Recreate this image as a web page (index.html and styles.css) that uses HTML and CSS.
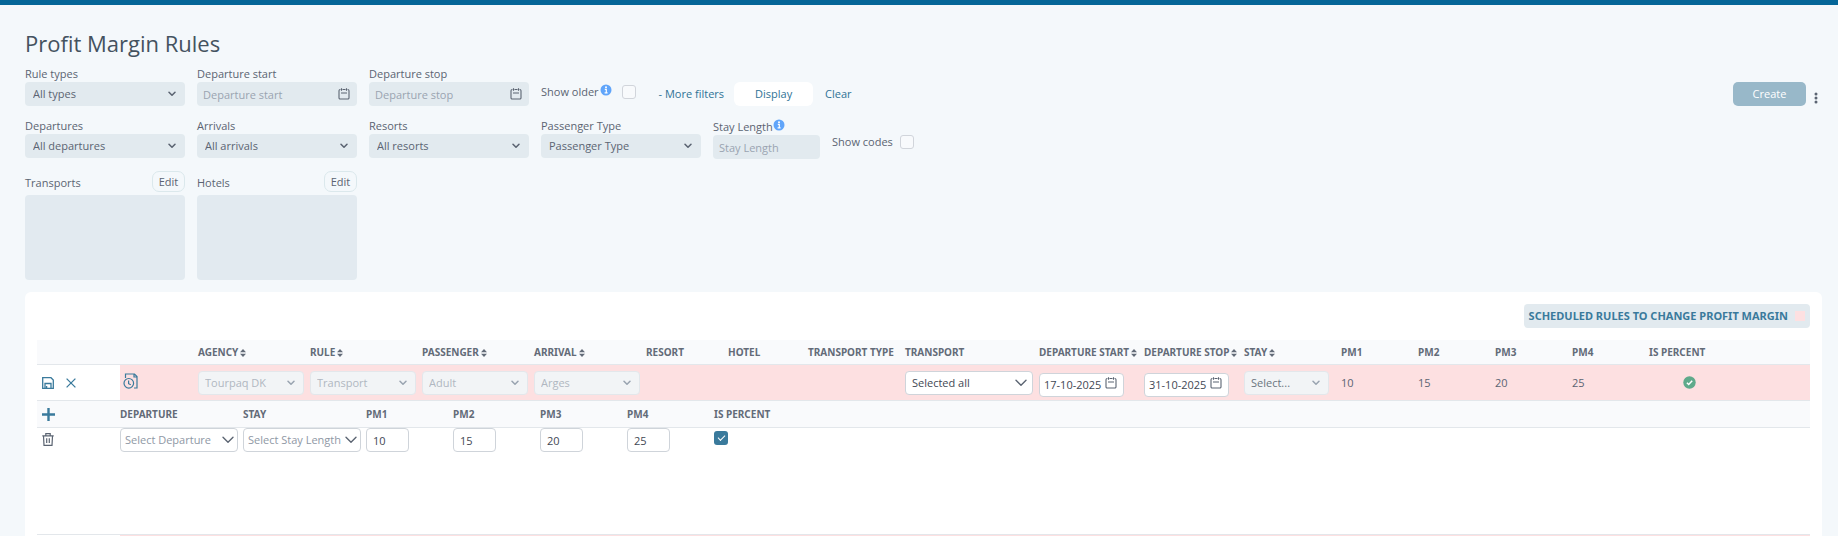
FILE: index.html
```html
<!DOCTYPE html>
<html lang="en">
<head>
<meta charset="utf-8">
<title>Profit Margin Rules</title>
<link rel="stylesheet" href="styles.css">
</head>
<body>
<svg class="sprite" width="0" height="0" aria-hidden="true">
  <symbol id="chev" viewBox="0 0 8 6"><path d="M1 1.2 4 4.3 7 1.2" fill="none" stroke="currentColor" stroke-width="1.5" stroke-linecap="round" stroke-linejoin="round"/></symbol>
  <symbol id="chev-lg" viewBox="0 0 12 8"><path d="M1 1.3 6 6.3 11 1.3" fill="none" stroke="currentColor" stroke-width="1.4" stroke-linecap="round" stroke-linejoin="round"/></symbol>
  <symbol id="cal" viewBox="0 0 12 12"><path d="M3.500.2v2.600M8.500.2v2.600M3 5h6M4.500 1.500h3M2.400 1.500H2A1.300 1.300 0 0 0 1 2.800v6.900A1.200 1.200 0 0 0 2.200 11h7.600A1.200 1.200 0 0 0 11 9.700V2.800A1.300 1.300 0 0 0 10 1.500h-.4" fill="none" stroke="currentColor" stroke-width="1.100"/></symbol>
  <symbol id="info" viewBox="0 0 12 12"><circle cx="6" cy="6" r="5.500" fill="#60a5fa"/><circle cx="6" cy="3.200" r="1" fill="#fff"/><path d="M4.800 5.300h1.500v3.400M4.600 8.900h3" fill="none" stroke="#fff" stroke-width="1.200"/></symbol>
  <symbol id="sort" viewBox="0 0 6 8"><path d="M3 0 6 3.300H0zM3 8 0 4.700h6z" fill="currentColor"/></symbol>
  <symbol id="save" viewBox="0 0 12 12"><path d="M.7.7h8.300l2.300 2.300v8.300H.7zM3 11.300V6.500h6v4.800M4.600 11V9" fill="none" stroke="currentColor" stroke-width="1.300"/></symbol>
  <symbol id="close" viewBox="0 0 10 10"><path d="M.6.6l8.800 8.800M9.400.6.6 9.400" fill="none" stroke="currentColor" stroke-width="1.300"/></symbol>
  <symbol id="history" viewBox="0 0 15 16"><path d="M2.500 5V1h9L14 3.500V15h-3M11 1v3h3" fill="none" stroke="currentColor" stroke-width="1.200"/><circle cx="5.800" cy="10.300" r="4.800" fill="none" stroke="currentColor" stroke-width="1.200"/><path d="M5.600 7.500v3.200l2.200 1.100" fill="none" stroke="currentColor" stroke-width="1.200"/></symbol>
  <symbol id="plus" viewBox="0 0 13 13"><path d="M6.500 0v13M0 6.500h13" fill="none" stroke="currentColor" stroke-width="2.400"/></symbol>
  <symbol id="trash" viewBox="0 0 12 13"><path d="M.3 2.800h11.400M3.800 2.600V.7h4.400v1.900M1.500 3l.5 9.300h8l.5-9.300M4.700 5.300v4.700M7.300 5.300v4.700" fill="none" stroke="currentColor" stroke-width="1.200"/></symbol>
  <symbol id="ok" viewBox="0 0 13 13"><circle cx="6.500" cy="6.500" r="6.200" fill="#5faa8b"/><path d="M3.900 6.700l1.800 1.800 3.500-3.700" fill="none" stroke="#fff" stroke-width="1.500"/></symbol>
  <symbol id="dots" viewBox="0 0 4 12"><g fill="currentColor"><circle cx="2" cy="2" r="1.500"/><circle cx="2" cy="6" r="1.500"/><circle cx="2" cy="10" r="1.500"/></g></symbol>
</svg>

<div class="topbar"></div>
<main class="page">
  <h1>Profit Margin Rules</h1>

  <form class="filters">
    <div class="filter-row">
      <div class="field">
        <label for="types">Rule types</label>
        <div class="control"><select id="types"><option>All types</option></select><svg class="chev"><use href="#chev"/></svg></div>
      </div>
      <div class="field">
        <label for="dstart">Departure start</label>
        <div class="control"><input id="dstart" type="text" placeholder="Departure start"><svg class="cal"><use href="#cal"/></svg></div>
      </div>
      <div class="field">
        <label for="dstop">Departure stop</label>
        <div class="control"><input id="dstop" type="text" placeholder="Departure stop"><svg class="cal"><use href="#cal"/></svg></div>
      </div>
      <div class="check check-older">
        <label for="older">Show older</label><svg class="info"><use href="#info"/></svg><input id="older" type="checkbox">
      </div>
      <div class="actions">
        <button type="button" class="link">- More filters</button>
        <button type="button" class="display">Display</button>
        <button type="button" class="link">Clear</button>
      </div>
      <div class="right">
        <button type="button" class="create">Create</button>
        <button type="button" class="menu" aria-label="Menu"><svg class="dots"><use href="#dots"/></svg></button>
      </div>
    </div>

    <div class="filter-row">
      <div class="field">
        <label for="deps">Departures</label>
        <div class="control"><select id="deps"><option>All departures</option></select><svg class="chev"><use href="#chev"/></svg></div>
      </div>
      <div class="field">
        <label for="arrs">Arrivals</label>
        <div class="control"><select id="arrs"><option>All arrivals</option></select><svg class="chev"><use href="#chev"/></svg></div>
      </div>
      <div class="field">
        <label for="resorts">Resorts</label>
        <div class="control"><select id="resorts"><option>All resorts</option></select><svg class="chev"><use href="#chev"/></svg></div>
      </div>
      <div class="field">
        <label for="ptype">Passenger Type</label>
        <div class="control"><select id="ptype"><option>Passenger Type</option></select><svg class="chev"><use href="#chev"/></svg></div>
      </div>
      <div class="field field-stay">
        <div class="label-line"><label for="stay">Stay Length</label><svg class="info"><use href="#info"/></svg></div>
        <div class="control"><input id="stay" type="text" placeholder="Stay Length"></div>
      </div>
      <div class="check check-codes">
        <label for="codes">Show codes</label><input id="codes" type="checkbox">
      </div>
    </div>

    <div class="filter-row">
      <div class="field">
        <div class="list-head"><label for="transports">Transports</label><button type="button" class="edit">Edit</button></div>
        <textarea id="transports" readonly></textarea>
      </div>
      <div class="field">
        <div class="list-head"><label for="hotels">Hotels</label><button type="button" class="edit">Edit</button></div>
        <textarea id="hotels" readonly></textarea>
      </div>
    </div>
  </form>

  <section class="card">
    <div class="legend-line">
      <button type="button" class="legend">SCHEDULED RULES TO CHANGE PROFIT MARGIN<span class="swatch"></span></button>
    </div>

    <table class="rules">
      <colgroup>
        <col class="c-tools"><col class="c-hist"><col class="c-wide"><col class="c-wide"><col class="c-wide"><col class="c-wide">
        <col class="c-resort"><col class="c-hotel"><col class="c-ttype"><col class="c-transport"><col class="c-start"><col class="c-stop"><col class="c-stay">
        <col class="c-pm"><col class="c-pm"><col class="c-pm"><col class="c-pm"><col>
      </colgroup>
      <thead>
        <tr>
          <th></th><th></th>
          <th>AGENCY<svg class="sort"><use href="#sort"/></svg></th>
          <th>RULE<svg class="sort"><use href="#sort"/></svg></th>
          <th>PASSENGER<svg class="sort"><use href="#sort"/></svg></th>
          <th>ARRIVAL<svg class="sort"><use href="#sort"/></svg></th>
          <th>RESORT</th><th>HOTEL</th><th>TRANSPORT TYPE</th><th>TRANSPORT</th>
          <th>DEPARTURE START<svg class="sort"><use href="#sort"/></svg></th>
          <th>DEPARTURE STOP<svg class="sort"><use href="#sort"/></svg></th>
          <th>STAY<svg class="sort"><use href="#sort"/></svg></th>
          <th>PM1</th><th>PM2</th><th>PM3</th><th>PM4</th><th>IS PERCENT</th>
        </tr>
      </thead>
      <tbody>
        <tr class="scheduled">
          <td class="plain"><div class="tools"><button type="button" class="icon" aria-label="Save"><svg class="save"><use href="#save"/></svg></button><button type="button" class="icon" aria-label="Cancel"><svg class="close"><use href="#close"/></svg></button></div></td>
          <td class="hist"><svg class="history"><use href="#history"/></svg></td>
          <td><div class="control cell off"><select aria-label="Agency" disabled><option>Tourpaq DK</option></select><svg class="chev"><use href="#chev"/></svg></div></td>
          <td><div class="control cell off"><select aria-label="Rule" disabled><option>Transport</option></select><svg class="chev"><use href="#chev"/></svg></div></td>
          <td><div class="control cell off"><select aria-label="Passenger" disabled><option>Adult</option></select><svg class="chev"><use href="#chev"/></svg></div></td>
          <td><div class="control cell off"><select aria-label="Arrival" disabled><option>Arges</option></select><svg class="chev"><use href="#chev"/></svg></div></td>
          <td></td><td></td><td></td>
          <td><div class="control cell"><select aria-label="Transport"><option>Selected all</option></select><svg class="chev-lg"><use href="#chev-lg"/></svg></div></td>
          <td class="date"><div class="control cell"><input type="text" aria-label="Departure start" value="17-10-2025"><svg class="cal"><use href="#cal"/></svg></div></td>
          <td class="date"><div class="control cell"><input type="text" aria-label="Departure stop" value="31-10-2025"><svg class="cal"><use href="#cal"/></svg></div></td>
          <td class="stay"><div class="control cell off"><select aria-label="Stay" disabled><option>Select...</option></select><svg class="chev"><use href="#chev"/></svg></div></td>
          <td>10</td><td>15</td><td>20</td><td>25</td>
          <td class="percent"><svg class="ok"><use href="#ok"/></svg></td>
        </tr>
        <tr>
          <td class="nest" colspan="18">
            <table class="margins">
              <colgroup><col class="c-tools"><col class="m-wide"><col class="m-wide"><col class="m-pm"><col class="m-pm"><col class="m-pm"><col class="m-pm"><col></colgroup>
              <thead>
                <tr>
                  <th><div class="tools"><button type="button" class="icon" aria-label="Add"><svg class="plus"><use href="#plus"/></svg></button></div></th>
                  <th>DEPARTURE</th><th>STAY</th><th>PM1</th><th>PM2</th><th>PM3</th><th>PM4</th><th>IS PERCENT</th>
                </tr>
              </thead>
              <tbody>
                <tr>
                  <td><div class="tools"><button type="button" class="icon grey" aria-label="Delete"><svg class="trash"><use href="#trash"/></svg></button></div></td>
                  <td><div class="control cell hint"><select aria-label="Departure"><option>Select Departure</option></select><svg class="chev-lg"><use href="#chev-lg"/></svg></div></td>
                  <td><div class="control cell hint"><select aria-label="Stay"><option>Select Stay Length</option></select><svg class="chev-lg"><use href="#chev-lg"/></svg></div></td>
                  <td><div class="control cell num"><input type="text" aria-label="PM1" value="10"></div></td>
                  <td><div class="control cell num"><input type="text" aria-label="PM2" value="15"></div></td>
                  <td><div class="control cell num"><input type="text" aria-label="PM3" value="20"></div></td>
                  <td><div class="control cell num"><input type="text" aria-label="PM4" value="25"></div></td>
                  <td class="tick"><input type="checkbox" aria-label="Is percent" checked></td>
                </tr>
              </tbody>
            </table>
          </td>
        </tr>
        <tr class="scheduled next"><td class="plain"></td><td colspan="17"></td></tr>
      </tbody>
    </table>
  </section>
</main>
</body>
</html>
```
FILE: styles.css
```css
* { box-sizing: border-box; }

body {
  margin: 0;
  min-height: 100vh;
  display: flex;
  flex-direction: column;
  background: #f4f8fb;
  color: #5b6472;
  font-family: "Open Sans", "Noto Sans", sans-serif;
  font-size: 11px;
  line-height: 16px;
}

.sprite { display: none; }
svg { flex: none; }
button, input, select, textarea { font: inherit; color: inherit; margin: 0; }
button { border: 0; background: none; padding: 0; cursor: pointer; }

.topbar { height: 5px; background: #056698; }

.page {
  flex: 1;
  display: flex;
  flex-direction: column;
  padding: 22px 16px 0 25px;
}

h1 {
  margin: 0;
  color: #44525f;
  font-size: 22px;
  font-weight: 400;
  line-height: 32px;
}

.filters { padding-top: 7px; }
.filter-row { display: flex; gap: 12px; margin-bottom: 12px; }
.field { width: 160px; }
.field label, .check label { display: block; font-weight: 500; }
.field-stay { width: 107px; }
.label-line { display: flex; padding-top: 1px; }

/* The icon shares one grid cell with the box it belongs to. */
.control { display: grid; align-items: center; }
.control > * { grid-area: 1 / 1; }
.control select, .control input {
  appearance: none;
  width: 100%;
  min-width: 0;
  height: 24px;
  padding: 0 8px;
  border: 0;
  border-radius: 4px;
  background: #e2eaef;
  outline: 0;
}
.control input { padding: 0 6px; }
.control input::placeholder { color: #9aa4b1; opacity: 1; }
.control svg { justify-self: end; pointer-events: none; color: #5b6472; }
.chev { width: 8px; height: 6px; margin-right: 9px; }
.chev-lg { width: 12px; height: 8px; margin-right: 6px; }
.cal { width: 12px; height: 12px; margin-right: 7px; }

.check { display: flex; align-items: flex-start; }
.check-older { padding-top: 18px; }
.check-older .info { margin: 0 10px 0 1px; }
.check-codes { padding-top: 16px; gap: 7px; }
.info { width: 12px; height: 12px; }

input[type="checkbox"] {
  appearance: none;
  width: 14px;
  height: 14px;
  border: 1px solid #d1d5db;
  border-radius: 3px;
  background: #f8fafc;
}
.check input { margin-top: 1px; }

.actions { display: flex; gap: 10px; align-items: center; height: 24px; margin: 16px 0 0 11px; color: #2f7396; }
.display { width: 79px; height: 24px; margin-right: 2px; border-radius: 6px; background: #fff; }

.right { display: flex; gap: 8px; height: 24px; margin: 16px 4px 0 auto; }
.create { width: 73px; height: 24px; border-radius: 5px; background: #98b8c9; color: #fff; }
.menu { display: flex; align-items: flex-end; height: 22px; color: #5b6472; }
.dots { width: 4px; height: 12px; }

.list-head { display: flex; align-items: flex-start; justify-content: space-between; height: 24px; }
.list-head label { padding-top: 4px; }
.edit { width: 33px; height: 21px; border: 1px solid #dbe8ec; border-radius: 7px; }
textarea { display: block; width: 100%; height: 85px; border: 0; border-radius: 4px; background: #e2eaf0; resize: none; outline: 0; }

.card { flex: 1; padding: 12px 12px 0; border-radius: 6px 6px 0 0; background: #fff; }
.legend-line { display: flex; justify-content: flex-end; margin-bottom: 12px; }
.legend {
  display: flex;
  align-items: center;
  gap: 7px;
  height: 24px;
  padding: 0 5px;
  border-radius: 4px;
  background: #e2eaef;
  color: #3a7a9c;
  font-family: "Noto Sans", sans-serif;
  font-weight: 700;
}
.swatch { width: 10px; height: 10px; background: #fde0e1; }

table { width: 100%; table-layout: fixed; border-collapse: separate; border-spacing: 0; }
th, td { padding: 0; text-align: left; white-space: nowrap; }
th {
  height: 25px;
  border-bottom: 1px solid #e3e7eb;
  background: #f9fafc;
  color: #636b78;
  font-family: "Noto Sans", sans-serif;
  font-size: 10px;
  font-weight: 700;
}
.sort { width: 6px; height: 8px; margin-left: 2px; vertical-align: -1px; }

.c-tools { width: 83px; }
.c-hist { width: 78px; }
.c-wide { width: 112px; }
.c-resort { width: 82px; }
.c-hotel { width: 80px; }
.c-ttype { width: 97px; }
.c-transport { width: 134px; }
.c-start { width: 105px; }
.c-stop { width: 100px; }
.c-stay { width: 97px; }
.c-pm { width: 77px; }

.scheduled td { height: 36px; border-bottom: 1px solid #e3e7eb; background: #fde0e1; }
.scheduled .plain { background: #fff; }
.scheduled .hist { padding: 0 0 4px 3px; color: #3a7a9c; }
.scheduled .date { padding-top: 4px; }
.scheduled .percent { padding-left: 34px; }
.rules .next td { height: 1px; border: 0; }

.tools { display: flex; gap: 12px; padding-left: 5px; }
.icon { display: flex; color: #3a7a9c; }
.icon.grey { color: #5b6472; }
.save { width: 12px; height: 12px; }
.close { width: 10px; height: 10px; margin-top: 1px; }
.plus { width: 13px; height: 13px; }
.trash { width: 12px; height: 13px; }
.history { display: block; width: 15px; height: 16px; }
.ok { display: block; width: 13px; height: 13px; }

.cell { margin-right: 6px; }
.cell select, .cell input { padding: 0 6px; border: 1px solid #cfd4da; background: #fff; color: #3f4854; }
.cell select:disabled { border-color: #e3e7eb; background: #f2f4f6; color: #b0b7c1; opacity: 1; }
.cell.off svg { color: #9aa4b1; }
.stay .cell { margin-right: 12px; }
.stay .cell select:disabled { color: #6b7480; }
.date .cell { width: 85px; margin-right: 0; }
.date .cell input { padding: 0 4px; }
.date .cal { margin-bottom: 4px; }
.cell.hint select { padding: 0 4px; color: #8f98a5; }
.hint .chev-lg { margin-right: 4px; }

.m-wide { width: 123px; }
.m-pm { width: 87px; }
.margins th { height: 27px; }
.margins td { height: 107px; border-bottom: 1px solid #e3e7eb; vertical-align: top; }
.margins .hint { margin-right: 5px; }
.margins .num { width: 43px; margin-right: 0; }
.margins td .tools { padding-top: 5px; }
.margins .tick { padding-top: 3px; line-height: 0; }
.tick input:checked {
  border: 0;
  background: #3a7a9c;
  display: inline-grid;
  place-items: center;
}
.tick input:checked::before {
  content: "";
  width: 6px;
  height: 3px;
  margin-bottom: 2px;
  border: solid #fff;
  border-width: 0 0 1px 1px;
  transform: rotate(-45deg);
}
```
